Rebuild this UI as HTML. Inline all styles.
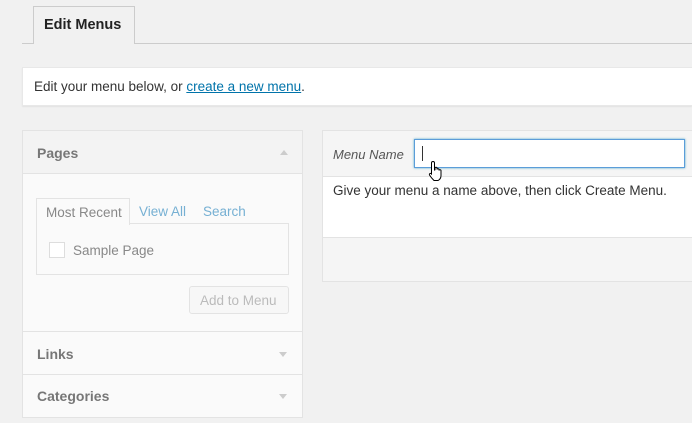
<!DOCTYPE html>
<html><head><style>
*{box-sizing:border-box;margin:0;padding:0}
body{width:692px;height:423px;background:#f1f1f1;font-family:"Liberation Sans",sans-serif;font-size:13.5px;color:#444;position:relative;overflow:hidden}
.a{position:absolute}
</style></head><body>
<div class="a" style="left:22px;top:43px;width:670px;height:1px;background:#ccc"></div>
<div class="a" style="left:33px;top:6px;width:102px;height:38px;background:#f1f1f1;border:1px solid #ccc;border-bottom:none;font-size:14.5px;font-weight:bold;color:#222;padding:10px 0 0 10px">Edit Menus</div>
<div class="a" style="left:22px;top:67px;width:670px;height:39px;background:#fff;box-shadow:0 1px 1px rgba(0,0,0,.06);border:1px solid #e8e8e8;border-right:none;padding:11px 0 0 11px;color:#333">Edit your menu below, or <span style="color:#0073aa;text-decoration:underline">create a new menu</span>.</div>

<div class="a" style="left:22px;top:130px;width:281px;height:288px;background:#fafafa;border:1px solid #e3e3e3">
 <div class="a" style="left:0;top:0;width:279px;height:43px;background:#f3f3f3;border-bottom:1px solid #e3e3e3;padding:14px 0 0 14px;font-weight:bold;color:#777;font-size:14px">Pages</div>
 <div class="a" style="left:257px;top:19px;border:4px solid transparent;border-bottom:5px solid #ccc;border-top:none"></div>
 <div class="a" style="left:13px;top:67px;width:94px;height:27px;border:1px solid #e3e3e3;border-bottom:none;background:#fafafa;padding:6px 0 0 9px;color:#888;z-index:2">Most Recent</div>
 <div class="a" style="left:116px;top:73px;color:#76b0d3">View All</div>
 <div class="a" style="left:180px;top:73px;color:#76b0d3">Search</div>
 <div class="a" style="left:13px;top:92px;width:253px;height:52px;border:1px solid #e3e3e3"></div>
 <div class="a" style="left:26px;top:111px;width:16px;height:16px;border:1px solid #ddd;background:#fff"></div>
 <div class="a" style="left:50px;top:112px;color:#888">Sample Page</div>
 <div class="a" style="left:166px;top:155px;width:100px;height:28px;border:1px solid #e3e3e3;border-radius:3px;background:#f7f7f7;color:#bbb;padding:6px 0 0 10px">Add to Menu</div>
 <div class="a" style="left:0;top:200px;width:279px;height:1px;background:#e3e3e3"></div>
 <div class="a" style="left:14px;top:215px;font-weight:bold;color:#777;font-size:14px">Links</div>
 <div class="a" style="left:256px;top:221px;border:4px solid transparent;border-top:5px solid #ccc;border-bottom:none"></div>
 <div class="a" style="left:0;top:243px;width:279px;height:1px;background:#e3e3e3"></div>
 <div class="a" style="left:14px;top:257px;font-weight:bold;color:#777;font-size:14px">Categories</div>
 <div class="a" style="left:256px;top:263px;border:4px solid transparent;border-top:5px solid #ccc;border-bottom:none"></div>
</div>

<div class="a" style="left:322px;top:130px;width:371px;height:152px;background:#f5f5f5;border:1px solid #e3e3e3;border-right:none">
 <div class="a" style="left:10px;top:16px;font-style:italic;color:#555;font-size:13px">Menu Name</div>
 <div class="a" style="left:91px;top:8px;width:271px;height:29px;background:#fff;border:1px solid #5b9dd9;box-shadow:0 0 2px rgba(30,140,190,.8)"></div>
 <div class="a" style="left:99px;top:15px;width:1px;height:15px;background:#333"></div>
 <div class="a" style="left:0;top:45px;width:370px;height:62px;background:#fff;border-top:1px solid #e3e3e3;border-bottom:1px solid #e3e3e3;padding:6px 0 0 10px;color:#333">Give your menu a name above, then click Create Menu.</div>
 <svg class="a" style="left:105px;top:29px" width="18" height="22" viewBox="0 0 18 22"><path d="M5 1.5c1 0 1.5.6 1.5 1.5v7l.5-.2V8c0-1 2-1 2 0v1.5c0-1 2-1 2 0v1c0-1 2-1 2 0v5c0 2-1 4-3 5H6c-1-1-3-3-4.5-5.5-.5-1 .5-2 1.5-1.5L3.5 14V3c0-.9.6-1.5 1.5-1.5z" fill="#fff" stroke="#000" stroke-width="1"/></svg>
</div>
</body></html>
